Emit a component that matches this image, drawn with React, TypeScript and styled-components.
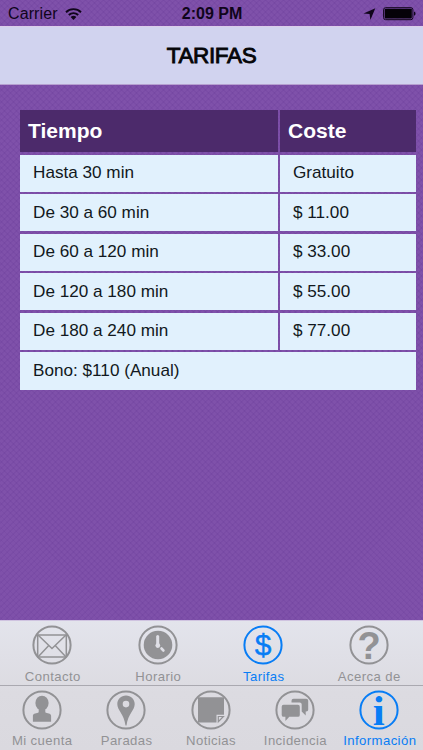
import React from 'react';
import styled, { createGlobalStyle } from 'styled-components';

const GlobalStyle = createGlobalStyle`
  * { box-sizing: border-box; }
  body {
    margin: 0;
    font-family: "Liberation Sans", Arial, sans-serif;
  }
`;

const Screen = styled.div`
  display: flex;
  flex-direction: column;
  width: 423px;
  height: 750px;
  overflow: hidden;
  background-color: #7f51aa;
  background-image:
    repeating-linear-gradient(45deg, rgba(70, 25, 125, 0.08) 0 1.4px, transparent 1.4px 4.243px),
    repeating-linear-gradient(-45deg, rgba(70, 25, 125, 0.08) 0 1.4px, transparent 1.4px 4.243px);
`;

const StatusBar = styled.div`
  display: grid;
  grid-template-columns: 1fr auto 1fr;
  align-items: center;
  flex: none;
  height: 26px;
  padding: 2px 7px 0 8px;
  color: #10051b;
  font-size: 16px;
  line-height: 24px;
`;

const Carrier = styled.div`
  display: flex;
  align-items: center;
  gap: 7px;
  letter-spacing: 0.1px;
`;

const Clock = styled.div`
  font-weight: 700;
`;

const Indicators = styled.div`
  display: flex;
  align-items: center;
  justify-content: flex-end;
  gap: 7px;
`;

const TitleBar = styled.header`
  display: flex;
  align-items: center;
  justify-content: center;
  flex: none;
  height: 59px;
  border-top: 1px solid #dccdea;
  border-bottom: 1px solid #b6a0d0;
  background: #d1d3ef;
`;

const Title = styled.h1`
  margin: 0;
  color: #050508;
  font-size: 22.5px;
  font-weight: 400;
  letter-spacing: -0.35px;
  -webkit-text-stroke: 0.9px #050508;
`;

const Content = styled.main`
  flex: 1;
  padding: 25px 7px 0 20px;
`;

const Rates = styled.div`
  display: grid;
  grid-template-columns: 257.5px 1fr;
  grid-template-rows: 42px;
  grid-auto-rows: 37.1px;
  gap: 2.5px;
`;

const HeadCell = styled.div`
  display: flex;
  align-items: center;
  padding-left: 8px;
  background: #4c2a6b;
  color: #fff;
  font-size: 21px;
  font-weight: 700;
`;

const Cell = styled.div<{ $wide?: boolean }>`
  display: flex;
  align-items: center;
  grid-column: ${(p) => (p.$wide ? '1 / -1' : 'auto')};
  padding: 0 0 1px 13px;
  background: #e1f1fd;
  color: #111820;
  font-size: 17.15px;
`;

const TabBar = styled.nav`
  flex: none;
  height: 130px;
  border-top: 1px solid #cfc3e0;
  background: linear-gradient(#e3e4ec, #dcdbe1 55%, #dad9df);
`;

const TabRow = styled.div<{ $divided?: boolean }>`
  display: flex;
  height: ${(p) => (p.$divided ? 66 : 63.5)}px;
  padding: 4px 1px 0 0;
  border-top: ${(p) => (p.$divided ? '1px solid #aaa9b0' : 'none')};
`;

const Tab = styled.div<{ $active?: boolean }>`
  display: flex;
  flex: 1 1 0;
  flex-direction: column;
  align-items: center;
  color: ${(p) => (p.$active ? '#087df5' : '#929295')};
`;

const TabIcon = styled.svg`
  display: block;
  flex: none;
  width: 40px;
  height: 40px;
  margin-left: -1px;
  overflow: visible;
`;

const TabLabel = styled.span`
  margin-top: 3.6px;
  font-size: 13.15px;
  line-height: 16px;
  letter-spacing: 0.4px;
  white-space: nowrap;
`;

const GlyphText = styled.text<{ $serif?: boolean; $bold?: boolean; $size: number }>`
  fill: currentColor;
  font-family: ${(p) => (p.$serif ? '"Liberation Serif", serif' : '"Liberation Sans", sans-serif')};
  font-size: ${(p) => p.$size}px;
  font-weight: ${(p) => (p.$bold ? 700 : 400)};
  text-anchor: middle;
`;

const icons: Record<string, React.ReactNode> = {
  mail: (
    <g fill="none" stroke="currentColor" strokeWidth="1.5">
      <path d="M5.7 10h28.6v22H5.7z" />
      <path d="M6 10l14 13.5L34 10M6 32l10.8-11.4M34 32L23.2 20.6" />
    </g>
  ),
  clock: (
    <>
      <circle cx="20" cy="20" r="14.3" fill="currentColor" />
      <path d="M19.7 11.6v9.2" stroke="#dfdfe6" strokeWidth="3" strokeLinecap="round" fill="none" />
      <circle cx="19.8" cy="20.6" r="2.4" fill="#dfdfe6" />
      <path d="M23.6 23.6l1.7 1.8" stroke="#dfdfe6" strokeWidth="2.8" strokeLinecap="round" />
    </>
  ),
  dollar: (
    <GlyphText $size={30} x="20" y="30" stroke="currentColor" strokeWidth="0.4">$</GlyphText>
  ),
  question: (
    <GlyphText $size={38} $bold x="20" y="34">?</GlyphText>
  ),
  person: (
    <g fill="currentColor">
      <ellipse cx="20" cy="13" rx="6.6" ry="7.3" />
      <path d="M16.7 17h6.6v5.2c1.6 1.2 5.8.8 5.8 3.6v6H10.9v-6c0-2.8 4.2-2.4 5.8-3.6z" />
    </g>
  ),
  pin: (
    <path
      fill="currentColor"
      fillRule="evenodd"
      d="M20 5.4c-5 0-8.7 3.7-8.7 8.5 0 6.5 6.7 9.5 8.2 21.6h1c1.5-12.1 8.2-15.1 8.2-21.6 0-4.8-3.7-8.5-8.7-8.5zm0 5.4a3.3 3.3 0 1 1 0 6.6 3.3 3.3 0 0 1 0-6.6z"
    />
  ),
  note: (
    <>
      <path fill="currentColor" d="M7 7.2h26v17.6h-7.5v7.6H7z" />
      <path fill="none" stroke="currentColor" strokeWidth="1.2" d="M32.4 26.5h-5.1v5.2z" />
    </>
  ),
  chat: (
    <g fill="currentColor">
      <path d="M18.5 8.8h12.7q2 0 2 2v9q0 1.8-2 1.8h-.5v4l-4-4v-7.2q0-2-2-2h-8.2v-1.6q0-2 2-2z" />
      <path d="M8.6 14.8h14.3q1.9 0 1.9 1.9v8.2q0 1.9-1.9 1.9h-8.6L10.4 31v-4.2H8.6q-1.9 0-1.9-1.9v-8.2q0-1.9 1.9-1.9z" />
    </g>
  ),
  info: (
    <GlyphText $size={43} $serif $bold x="19.8" y="34.7">i</GlyphText>
  ),
};

interface TabItem {
  label: string;
  icon: string;
  active?: boolean;
}

const upperTabs: TabItem[] = [
  { label: 'Contacto', icon: 'mail' },
  { label: 'Horario', icon: 'clock' },
  { label: 'Tarifas', icon: 'dollar', active: true },
  { label: 'Acerca de', icon: 'question' },
];

const lowerTabs: TabItem[] = [
  { label: 'Mi cuenta', icon: 'person' },
  { label: 'Paradas', icon: 'pin' },
  { label: 'Noticias', icon: 'note' },
  { label: 'Incidencia', icon: 'chat' },
  { label: 'Información', icon: 'info', active: true },
];

const rates = [
  ['Hasta 30 min', 'Gratuito'],
  ['De 30 a 60 min', '$ 11.00'],
  ['De 60 a 120 min', '$ 33.00'],
  ['De 120 a 180 min', '$ 55.00'],
  ['De 180 a 240 min', '$ 77.00'],
];

function Tabs({ items, divided }: { items: TabItem[]; divided?: boolean }) {
  return (
    <TabRow $divided={divided}>
      {items.map((item) => (
        <Tab key={item.label} $active={item.active}>
          <TabIcon viewBox="0 0 40 40">
            <circle cx="20" cy="20" r="18.6" fill="none" stroke="currentColor" strokeWidth="2" />
            {icons[item.icon]}
          </TabIcon>
          <TabLabel>{item.label}</TabLabel>
        </Tab>
      ))}
    </TabRow>
  );
}

export default function App() {
  return (
    <>
      <GlobalStyle />
      <Screen>
        <StatusBar>
          <Carrier>
            Carrier
            <svg width="17" height="13" viewBox="0 0 17 13">
              <g fill="none" stroke="#10051b" strokeWidth="1.9">
                <path d="M1 4.2a10.8 10.8 0 0 1 15 0" />
                <path d="M3.8 7a6.8 6.8 0 0 1 9.4 0" />
              </g>
              <path d="M8.5 12L5.6 9.1a4.2 4.2 0 0 1 5.8 0z" fill="#10051b" />
            </svg>
          </Carrier>
          <Clock>2:09 PM</Clock>
          <Indicators>
            <svg width="13" height="13" viewBox="0 0 13 13">
              <path d="M12.3 .2L7.4 12 6.6 6.1.5 5.4z" fill="#10051b" />
            </svg>
            <svg width="33" height="14" viewBox="0 0 33 14">
              <rect x="0.6" y="0.7" width="29.3" height="12" rx="2" fill="none" stroke="#10051b" strokeWidth="1" />
              <rect x="1.7" y="1.8" width="27.1" height="9.8" rx="0.8" fill="#050208" />
              <path d="M31 4.6q1.6.6 1.6 2.1T31 8.8z" fill="#10051b" />
            </svg>
          </Indicators>
        </StatusBar>
        <TitleBar>
          <Title>TARIFAS</Title>
        </TitleBar>
        <Content>
          <Rates>
            <HeadCell>Tiempo</HeadCell>
            <HeadCell>Coste</HeadCell>
            {rates.map(([time, cost]) => (
              <React.Fragment key={time}>
                <Cell>{time}</Cell>
                <Cell>{cost}</Cell>
              </React.Fragment>
            ))}
            <Cell $wide>Bono: $110 (Anual)</Cell>
          </Rates>
        </Content>
        <TabBar>
          <Tabs items={upperTabs} />
          <Tabs items={lowerTabs} divided />
        </TabBar>
      </Screen>
    </>
  );
}
